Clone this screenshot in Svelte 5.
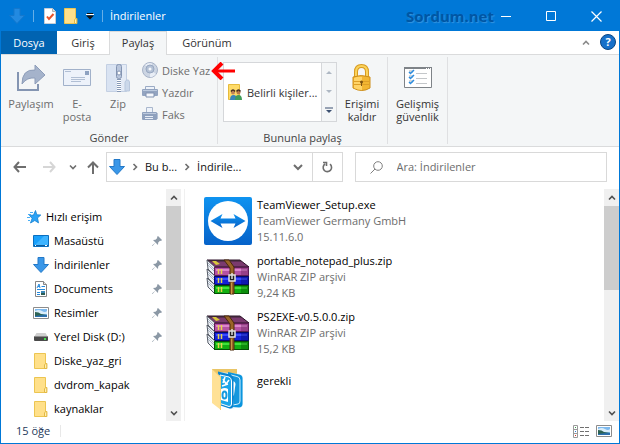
<script lang="ts">
	type TreeItem = { name: string; icon: string; pinned?: boolean };
	type FileItem = { name: string; icon: string; details: string[] };

	const tree: TreeItem[] = [
		{ name: 'Masaüstü', icon: 'desktop', pinned: true },
		{ name: 'İndirilenler', icon: 'download', pinned: true },
		{ name: 'Documents', icon: 'document', pinned: true },
		{ name: 'Resimler', icon: 'picture', pinned: true },
		{ name: 'Yerel Disk (D:)', icon: 'disk', pinned: true },
		{ name: 'Diske_yaz_gri', icon: 'folder' },
		{ name: 'dvdrom_kapak', icon: 'folder' },
		{ name: 'kaynaklar', icon: 'folder' }
	];

	const files: FileItem[] = [
		{ name: 'TeamViewer_Setup.exe', icon: 'teamviewer', details: ['TeamViewer Germany GmbH', '15.11.6.0'] },
		{ name: 'portable_notepad_plus.zip', icon: 'rar', details: ['WinRAR ZIP arşivi', '9,24 KB'] },
		{ name: 'PS2EXE-v0.5.0.0.zip', icon: 'rar', details: ['WinRAR ZIP arşivi', '15,2 KB'] },
		{ name: 'gerekli', icon: 'bigfolder', details: [''] }
	];

	const books = [
		{ y: 8, top: '#dc86cc', mid: '#b552a4', dark: '#5e1f55' },
		{ y: 17, top: '#3a4cff', mid: '#1420d8', dark: '#050a6a' },
		{ y: 26, top: '#3fe23a', mid: '#12b012', dark: '#045004' }
	];

	let search = $state('');
</script>

{#snippet downArrow()}
	<svg width="16" height="16" viewBox="0 0 16 16" aria-hidden="true">
		<path d="M5 .5h6v7h4.5L8 15.5.5 7.5H5z" fill="#3a97e8" stroke="#2379c8" />
	</svg>
{/snippet}

{#snippet folder()}
	<svg width="14" height="16" viewBox="0 0 14 16" aria-hidden="true">
		<path d="M.5.5h11v10h1.2v5H.5z" fill="#ffe08a" stroke="#ecc551" />
		<path d="M10.5 15.5V12l1-1.5h1.3v5z" fill="#fff0b4" stroke="#e3b844" />
	</svg>
{/snippet}

{#snippet picture()}
	<svg width="16" height="12" viewBox="0 0 16 12" aria-hidden="true">
		<path d="M.5.5h15v11H.5z" fill="#fff" stroke="#8c8c8c" />
		<path d="M2 2h12v8H2z" fill="#7db9ee" />
		<path d="M2 4q4-2 7 0t5 0v3H2z" fill="#d9edfa" />
		<path d="M2 5q4 0 6 2l6 1v2H2z" fill="#2d6354" />
		<path d="M2 9q6-1 12-1v2H2z" fill="#2b6fae" />
	</svg>
{/snippet}

{#snippet chevron(dir: string)}
	<svg class="chevron {dir}" width="8" height="8" viewBox="0 0 8 8" aria-hidden="true">
		<path d="M1 2.5 4 5.5l3-3" fill="none" stroke="currentColor" stroke-width="1.6" />
	</svg>
{/snippet}

{#snippet scrollbar()}
	<div class="scrollbar">
		<button aria-label="Yukarı kaydır">{@render chevron('up')}</button>
		<div class="thumb"></div>
		<button class="last" aria-label="Aşağı kaydır">{@render chevron('down')}</button>
	</div>
{/snippet}

{#snippet treeIcon(icon: string)}
	{#if icon === 'desktop'}
		<svg width="16" height="12" viewBox="0 0 16 12" aria-hidden="true">
			<path d="M.5.5h15v11H.5z" fill="#18a0fb" stroke="#0b6fbf" />
			<path d="M1 11 11 1h4v9z" fill="#3fb4ff" />
			<path d="M1 10.5h14" stroke="#0d5c9c" />
			<path d="M2 10.5h1M12 10.5h2" stroke="#fff" />
		</svg>
	{:else if icon === 'download'}
		{@render downArrow()}
	{:else if icon === 'document'}
		<svg width="12" height="16" viewBox="0 0 12 16" aria-hidden="true">
			<path d="M.5.5h8l3 3v12H.5z" fill="#fff" stroke="#858585" />
			<path d="M8.5.5v3h3" fill="#e4e4e4" stroke="#858585" />
			<path d="m2 7 2-4 1 4M3 5.500h2M6.500 5.500H10M2 8.500h8M2 11.500h3M2 13.500h3" fill="none" stroke="#2589dc" />
			<path d="M6 10h4v4H6z" fill="#3d87b8" />
			<path d="M6 12h4v2H6z" fill="#2b5d54" />
		</svg>
	{:else if icon === 'picture'}
		{@render picture()}
	{:else if icon === 'disk'}
		<svg width="14" height="10" viewBox="0 0 14 10" aria-hidden="true">
			<path d="M2.500 1h9L14 5H0z" fill="#cfcfcf" />
			<rect y="4" width="14" height="5" rx="1" fill="#4a4a4a" />
			<path d="M0 4.500h14" stroke="#8b8b8b" />
			<path d="M10 7h2" stroke="#45e04d" stroke-width="2" />
		</svg>
	{:else}
		{@render folder()}
	{/if}
{/snippet}

{#snippet fileIcon(icon: string)}
	{#if icon === 'teamviewer'}
		<svg width="48" height="48" viewBox="0 0 48 48" aria-hidden="true">
			<defs>
				<linearGradient id="tv" x2="0" y2="1">
					<stop offset="0" stop-color="#0f93f0" />
					<stop offset="1" stop-color="#0662c9" />
				</linearGradient>
			</defs>
			<rect width="48" height="48" rx="2" fill="url(#tv)" />
			<circle cx="24" cy="24" r="20" fill="#fff" />
			<path d="m6.500 24 12-7-2 4.500h15l-2-4.500 12 7-12 7 2-4.500h-15l2 4.500z" fill="url(#tv)" />
		</svg>
	{:else if icon === 'rar'}
		<svg width="44" height="36" viewBox="0 0 44 36" aria-hidden="true">
			<path d="M1 1h33l9 7H9z" fill="#7a3a6e" stroke="#2c1028" />
			<path d="M1 1h33l2 1.500H3z" fill="#3b2535" />
			<path d="m6 2 4 4 4-1-4-3z" fill="#d8c83c" />
			{#each books as book}
				<path d="M1 {book.y - 7}l8 7v9l-7-7z" fill="#eef2f7" stroke="#555b66" />
				<path d="m2 {book.y - 4} 6 6M2 {book.y - 2}l6 6" stroke="#a9b4c2" />
				<rect x="8.500" y={book.y + 0.5} width="34" height="8" fill={book.mid} stroke={book.dark} />
				<rect x="10" y={book.y + 2} width="31" height="2" fill={book.top} />
				<rect x="35" y={book.y + 1} width="7" height="7" fill={book.dark} opacity=".35" />
				<path d="M12.500 {book.y + 2}v5M15.500 {book.y + 2}v5" stroke="#e6d34a" stroke-width="1.500" />
			{/each}
			<path d="M18 1h5l5 7v27h-4V9z" fill="#9a6427" stroke="#4a2a0b" />
			<path d="M25.500 24v11" stroke="#c99746" />
			<rect x="23" y="16" width="6" height="6" fill="#222" stroke="#e4e4e4" stroke-width="1.500" />
			<path d="M26 14v6" stroke="#ddd" stroke-width="1.500" />
		</svg>
	{:else}
		<svg width="32" height="42" viewBox="0 0 32 42" aria-hidden="true">
			<path d="M0 1h25v8H8z" fill="#e9c566" />
			<path d="m7 4 20 2q4 1 4 4v26q0 3-4 3l-8 2-12-5z" fill="#d5edf8" />
			<path d="m16 4 11 2.500q3.500.5 3.500 4v25q0 4-3.500 4l-10-1z" fill="#0b95de" />
			<path d="m19 7 6 1.500q3 .5 3 3.500v21q0 3-2 3l-5 1z" fill="#1597dd" stroke="#d4effb" />
			<path d="M20 13q3 0 3.500 3L22 27l-3 3z" fill="#fff" />
			<path d="m6 3.500 12 3q3.500 1 3.500 5v25q0 4.500-4 4L7 37z" fill="#0a84d0" />
			<path d="m8 7 9 2q2.500 1 2.500 4v23q0 2.500-2.500 2.500L8 35.500z" fill="#1ba5e8" stroke="#fff" />
			<path d="M9 21q4-2 7 0v13l-7-2z" fill="#fff" />
			<path d="m11 11 3 5 3-4M10 18l6-2M13 9l-2 6" fill="none" stroke="#fff" stroke-width="1.500" />
			<ellipse cx="12.500" cy="27" rx="2" ry="3.500" fill="none" stroke="#159ade" stroke-width="2" />
			<path d="m0 1 9 8v33l-9-7z" fill="#ffe196" />
			<path d="m0 1 8.500 8v33" fill="none" stroke="#f3cf76" />
		</svg>
	{/if}
{/snippet}

<div class="window">
	<header class="titlebar">
		<span class="app-icon">{@render downArrow()}</span>
		<i class="bar"></i>
		<button aria-label="Özellikler">
			<svg width="12" height="16" viewBox="0 0 12 16" aria-hidden="true">
				<path d="M.5.5h8l3 3v12H.5z" fill="#fff" stroke="#c7ced6" />
				<path d="M8.500.5v3h3" fill="#ddd" stroke="#b0b0b0" />
				<path d="m3 8.500 2 2.500 4.500-5" fill="none" stroke="#e8522a" stroke-width="2" />
			</svg>
		</button>
		<button aria-label="Yeni klasör">{@render folder()}</button>
		<button aria-label="Hızlı Erişim Araç Çubuğunu Özelleştir">
			<svg width="8" height="7" viewBox="0 0 8 7" aria-hidden="true">
				<path d="M1 .5h6" stroke="#111" />
				<path d="M0 2.500h8L4 6.500z" fill="#111" />
				<path d="M0 1.500h8" stroke="#fff" />
			</svg>
		</button>
		<i class="bar"></i>
		<span class="title">İndirilenler</span>
		<span class="brand">Sordum.net</span>
		<div class="controls">
			<button aria-label="Simge durumuna küçült">
				<svg width="11" height="11" viewBox="0 0 11 11"><path d="M0 5.500h10" stroke="#fff" /></svg>
			</button>
			<button aria-label="Ekranı kapla">
				<svg width="11" height="11" viewBox="0 0 11 11"><path d="M.5.5h9v9h-9z" fill="none" stroke="#fff" /></svg>
			</button>
			<button aria-label="Kapat">
				<svg width="11" height="11" viewBox="0 0 11 11"><path d="m.5.5 10 10m0-10-10 10" stroke="#fff" stroke-width="1.200" /></svg>
			</button>
		</div>
	</header>

	<nav class="tabs">
		<button class="file">Dosya</button>
		<button class="home">Giriş</button>
		<button class="active">Paylaş</button>
		<button class="view">Görünüm</button>
		<button class="collapse" aria-label="Şeridi simge durumuna küçült">{@render chevron('up')}</button>
		<button class="help" aria-label="Yardım">?</button>
	</nav>

	<section class="ribbon">
		<div class="group send">
			<div class="tools">
				<button class="large share" disabled>
					<svg width="28" height="28" viewBox="0 0 28 28" aria-hidden="true">
						<path d="M1 8v18h20v-6" fill="none" stroke="#8495b2" stroke-width="2" />
						<path d="M5 20Q5 5 18 6V1l10 10-10 9v-6Q10 13 5 20z" fill="#a5b3cb" stroke="#8d9db9" />
					</svg>
					Paylaşım
				</button>
				<button class="large mail" disabled>
					<svg width="28" height="28" viewBox="0 0 28 28" aria-hidden="true">
						<path d="M.5 5.500h27v16H.5z" fill="#edf2fa" stroke="#a1b1ca" />
						<path d="M22 7h4v4h-4z" fill="#8ea2c1" />
						<path d="M2 7.500h6M8 13.500h14M8 15.500h14M8 17.500h10" stroke="#b1bfd4" />
					</svg>
					E-<br />posta
				</button>
				<button class="large zip" disabled>
					<svg width="24" height="28" viewBox="0 0 24 28" aria-hidden="true">
						<path d="M.5.5h20v27H.5z" fill="#d9e3f2" stroke="#c4d0e3" />
						<path d="M12 1h8v26h-8z" fill="#e4ebf6" />
						<path d="M19 27V18l1.500-2h2l1 2v9z" fill="#cbd8ea" stroke="#b8c7dd" />
						<path d="M13 1v27" stroke="#fff" stroke-width="4" />
						<path d="M13 1v27" stroke="#8799b5" stroke-width="4" stroke-dasharray="1 1" />
						<rect x="10.500" y=".5" width="5" height="14" rx="2" fill="#b9c6dc" stroke="#8394b2" />
						<circle cx="13" cy="9" r="2" fill="#fff" stroke="#8394b2" />
					</svg>
					Zip
				</button>
				<div class="small">
					<button disabled>
						<svg width="16" height="16" viewBox="0 0 16 16" aria-hidden="true">
							<circle cx="8" cy="8" r="7.500" fill="#ccd5e3" stroke="#a7b3c8" />
							<path d="m8 8-5-5q4-3 7-1.500zM8 8l6 4q-3 4-6 3z" fill="#e9eef6" />
							<circle cx="8" cy="7" r="4" fill="#b4c1d5" stroke="#98a8c1" />
							<circle cx="8" cy="7" r="1.500" fill="#f5f8fc" />
						</svg>
						Diske Yaz
					</button>
					<button disabled>
						<svg width="16" height="12" viewBox="0 0 16 12" aria-hidden="true">
							<path d="M3.500.5h9v3h-9z" fill="#eef3fa" stroke="#9babc5" />
							<rect y="3" width="16" height="7" rx="1" fill="#93a4c0" />
							<path d="M1 4.500h14" stroke="#bccade" />
							<path d="M4 7h8v4H4z" fill="#f4f7fc" stroke="#8192b0" />
						</svg>
						Yazdır
					</button>
					<button disabled>
						<svg width="16" height="14" viewBox="0 0 16 14" aria-hidden="true">
							<path d="M4.500.5h6v5h-6z" fill="#eef3fa" stroke="#a9b7cd" />
							<rect y="5" width="15" height="8" rx="1" fill="#8fa1be" />
							<path d="M1 6.500h13" stroke="#bdcade" />
							<path d="M3 9.500h8M3 11.500h8" stroke="#e8eef7" />
							<path d="M15.500 6v6" stroke="#b5c2d6" />
						</svg>
						Faks
					</button>
				</div>
			</div>
			<h2>Gönder</h2>
			<svg class="pointer" width="24" height="18" viewBox="0 0 24 18" aria-hidden="true">
				<path d="M3 9h21" stroke="#f00" stroke-width="3" />
				<path d="M11 1 3 9l8 8" fill="none" stroke="#f00" stroke-width="4" />
			</svg>
		</div>

		<div class="group with">
			<div class="tools">
				<div class="gallery">
					<button class="person">
						<svg width="14" height="16" viewBox="0 0 14 16" aria-hidden="true">
							<path d="M.5.5h11v15H.5z" fill="#ffdb68" stroke="#e6bb3d" />
							<path d="M2 16q0-5 3.500-5 3.500 0 3.500 5z" fill="#3b85b9" />
							<path d="M7 16q0-5 3.500-5 3.500 0 3.500 5z" fill="#419c5a" />
							<circle cx="5" cy="8.500" r="2" fill="#c08358" />
							<circle cx="10.500" cy="8.500" r="2" fill="#b77849" />
							<path d="M3 7.500q2-3 4 0M8.500 7.500q2-3 4 0" fill="none" stroke="#432b1e" stroke-width="1.500" />
						</svg>
						Belirli kişiler...
					</button>
					<div class="spin">
						<button aria-label="Önceki satır"><svg width="6" height="3" viewBox="0 0 6 3"><path d="M0 3h6L3 0z" fill="#aeb7c3" /></svg></button>
						<button aria-label="Sonraki satır"><svg width="6" height="3" viewBox="0 0 6 3"><path d="M0 0h6L3 3z" fill="#aeb7c3" /></svg></button>
						<button aria-label="Diğer"><svg width="8" height="7" viewBox="0 0 8 7"><path d="M0 1h8" stroke="#3a4f70" /><path d="M1 3h6L4 6z" fill="#3a4f70" /></svg></button>
					</div>
				</div>
				<button class="large lock">
					<svg width="20" height="28" viewBox="0 0 20 28" aria-hidden="true">
						<path d="M4 14V8q0-6 5.500-6T15 8v6" fill="none" stroke="#d79a20" stroke-width="4" />
						<path d="M4 14V8q0-6 5.500-6T15 8v6" fill="none" stroke="#fbd35b" stroke-width="2" />
						<path d="M1 13q8-3 17 0v11q-8 5-17 0z" fill="#f2b632" stroke="#cd8e1a" />
						<path d="M2 14q4-2 8-1v13q-4 0-8-2z" fill="#ffd468" />
						<path d="M2 17.500h15M2 20.500h15" stroke="#de9f27" />
						<circle cx="9.500" cy="18" r="1.500" fill="#7d5210" />
						<path d="M9.500 18v4" stroke="#7d5210" />
					</svg>
					Erişimi<br />kaldır
				</button>
			</div>
			<h2>Bununla paylaş</h2>
		</div>

		<div class="group">
			<button class="large security">
				<svg width="28" height="28" viewBox="0 0 28 28" aria-hidden="true">
					<path d="M.5 3.500h27v20H.5z" fill="#fff" stroke="#7e8388" />
					<path d="M0 4h28" stroke="#7e8388" stroke-width="2" />
					<path d="M22 4.500h1m1 0h1m1 0h1" stroke="#fff" />
					<path d="M5 6h4v3H5zm0 5h4v3H5zm0 5h4v3H5z" fill="#d5d8dc" />
					<path d="m5 8 1.500 1.500L10 6m-5 7 1.500 1.500L10 11m-5 7 1.500 1.500L10 16" fill="none" stroke="#2b8de0" stroke-width="1.500" />
					<path d="M12 9.500h11M12 14.500h11M12 19.500h11" stroke="#c4c7ca" />
				</svg>
				Gelişmiş<br />güvenlik
			</button>
		</div>
	</section>

	<div class="navbar">
		<button class="go" aria-label="Geri">
			<svg width="13" height="12" viewBox="0 0 13 12"><path d="M6 1 1.500 6 6 11M1.500 6H13" fill="none" stroke="#6e6e6e" stroke-width="2" /></svg>
		</button>
		<button class="go" aria-label="İleri">
			<svg width="13" height="12" viewBox="0 0 13 12"><path d="m7 1 4.500 5L7 11m4.500-5H0" fill="none" stroke="#d6d6d6" stroke-width="2" /></svg>
		</button>
		<button class="recent" aria-label="Son konumlar">{@render chevron('down')}</button>
		<button class="parent" aria-label="Yukarı">
			<svg width="12" height="13" viewBox="0 0 12 13"><path d="m1 6.500 5-5 5 5M6 1.500V13" fill="none" stroke="#6e6e6e" stroke-width="2" /></svg>
		</button>
		<div class="address">
			{@render downArrow()}
			{@render chevron('right')}
			<a href="#pc">Bu b...</a>
			{@render chevron('right')}
			<a href="#downloads">İndirile...</a>
			<button class="history" aria-label="Önceki konumlar">
				<svg width="10" height="7" viewBox="0 0 10 7"><path d="m1 1 4 4 4-4" fill="none" stroke="#6e6e6e" stroke-width="2" /></svg>
			</button>
			<button class="refresh" aria-label="Yenile">
				<svg width="11" height="12" viewBox="0 0 11 12"><path d="M8 3.200A4.200 4.200 0 1 1 3 3M1 1.500h3.500V5" fill="none" stroke="#6e6e6e" stroke-width="1.600" /></svg>
			</button>
		</div>
		<label class="search">
			<svg width="13" height="13" viewBox="0 0 13 13" aria-hidden="true">
				<circle cx="8" cy="5" r="4.300" fill="none" stroke="#808080" />
				<path d="M5 8 .5 12.500" stroke="#808080" />
			</svg>
			<input type="text" placeholder="Ara: İndirilenler" aria-label="Ara: İndirilenler" bind:value={search} />
		</label>
	</div>

	<main>
		<aside>
			<ul class="tree">
				<li class="root">
					<a href="#quick">
						<svg width="14" height="14" viewBox="0 0 14 14" aria-hidden="true">
							<path d="m8.500.5 1.300 4.300 4 .2-3.300 2.900 1 5-3.700-2.400L3.500 13l1.600-4.600-2.600-3 4-.3z" fill="#2ba3f7" stroke="#1480cf" stroke-width=".8" />
							<path d="M3 2.500h3M1 4.500h3M0 7.500h3M1 10.500h2" stroke="#48aef5" />
						</svg>
						Hızlı erişim
					</a>
				</li>
				{#each tree as item}
					<li>
						<a href="#{item.name}">
							<span class="tree-icon">{@render treeIcon(item.icon)}</span>
							{item.name}
						</a>
						{#if item.pinned}
							<svg class="pin" width="10" height="10" viewBox="0 0 10 10" aria-hidden="true">
								<path d="M6 0 10 4 9 5l-1-.3L6.200 6.500 6 9 3.500 6.500.5 10 0 9.500 3.500 6.500 1 4l2.500-.2L5.300 2 5 1z" fill="#8b98a5" />
							</svg>
						{/if}
					</li>
				{/each}
			</ul>
			{@render scrollbar()}
		</aside>
		<ul class="files">
			{#each files as file}
				<li>
					<span class="thumbnail">{@render fileIcon(file.icon)}</span>
					<div>
						<a href="#{file.name}">{file.name}</a>
						{#each file.details as line}
							<p>{line}</p>
						{/each}
					</div>
				</li>
			{/each}
		</ul>
		{@render scrollbar()}
	</main>

	<footer>
		<span class="count">15 öğe</span>
		<button aria-label="Ayrıntılar">
			<svg width="16" height="13" viewBox="0 0 16 13" aria-hidden="true">
				<path d="M.5.5h4v12h-4zm0 4h4m-4 4h4" fill="#fff" stroke="#9a9a9a" />
				<path d="M7 2.500h4m1 0h4m-9 4h4m1 0h4m-9 4h4m1 0h4" stroke="#707070" />
				<path d="M2 2.500h1" stroke="#3a9e4a" />
				<path d="M2 6.500h1" stroke="#2b7fe0" />
				<path d="M2 10.500h1" stroke="#e0301e" />
			</svg>
		</button>
		<button aria-label="Büyük simgeler">{@render picture()}</button>
	</footer>
</div>

<style>
	:global(body) {
		margin: 0;
	}

	.window {
		display: flex;
		flex-direction: column;
		box-sizing: border-box;
		min-height: 100vh;
		border: 1px solid #0078d7;
		background: #fff;
		color: #000;
		font: 11px/16px 'Open Sans', 'Noto Sans', sans-serif;
	}

	button {
		display: flex;
		align-items: center;
		justify-content: center;
		margin: 0;
		padding: 0;
		border: 0;
		background: none;
		color: inherit;
		font: inherit;
	}

	a {
		color: inherit;
		text-decoration: none;
	}

	svg {
		display: block;
		flex: none;
	}

	ul {
		margin: 0;
		padding: 0;
		list-style: none;
	}

	.titlebar {
		display: flex;
		align-items: center;
		gap: 8px;
		height: 30px;
		padding-left: 8px;
		background: #0078d7;
		color: #fff;
	}

	.app-icon {
		opacity: 0.6;
	}

	.bar {
		width: 1px;
		height: 12px;
		margin-right: 2px;
		background: #66aee7;
	}

	.title {
		margin-right: auto;
		margin-left: -3px;
	}

	.brand {
		margin-right: -8px;
		color: #0056a4;
		font-size: 15px;
		font-weight: 700;
		text-shadow: 1px 1px 1px #3394df;
	}

	.controls {
		display: flex;
		gap: 20px;
		padding-right: 10px;
	}

	.controls button {
		width: 25px;
		height: 30px;
	}

	.tabs {
		display: flex;
		height: 23px;
		border-bottom: 1px solid #dadbdc;
		color: #333;
	}

	.file {
		width: 56px;
		background: #0063b1;
		color: #fff;
	}

	.home {
		width: 52px;
	}

	.active {
		width: 58px;
		height: 24px;
		padding-bottom: 1px;
		border: 1px solid #dadbdc;
		border-bottom: 0;
		background: #f4f6f7;
	}

	.view {
		width: 80px;
	}

	.collapse {
		margin-left: auto;
		color: #8a8a8a;
	}

	.help {
		width: 16px;
		height: 16px;
		margin: 3px 3px 0 10px;
		border: 1px solid #0a4683;
		border-radius: 50%;
		background: #1670c9;
		color: #fff;
		font-weight: 700;
	}

	.ribbon {
		display: flex;
		height: 91px;
		border-bottom: 1px solid #dadbdc;
		background: #f4f6f7;
		color: #333;
		line-height: 13px;
	}

	.group {
		position: relative;
		display: flex;
		flex-direction: column;
		margin: 2px 0;
		border-right: 1px solid #dfe0e2;
	}

	.group h2 {
		margin: auto 0 0;
		color: #444;
		font-size: 11px;
		font-weight: 400;
		line-height: 13px;
		text-align: center;
	}

	.tools {
		display: flex;
	}

	.send .tools {
		width: 215px;
		padding-left: 1px;
		color: #6d6d6d;
	}

	.large {
		flex-direction: column;
		justify-content: flex-start;
		gap: 5px;
		padding-top: 7px;
		white-space: nowrap;
	}

	.share {
		width: 58px;
	}

	.mail {
		width: 34px;
	}

	.zip {
		width: 48px;
	}

	.small {
		display: flex;
		flex-direction: column;
		gap: 6px;
		padding-top: 5px;
	}

	.small button {
		justify-content: flex-start;
		gap: 4px;
		height: 16px;
		white-space: nowrap;
	}

	.pointer {
		position: absolute;
		top: 5px;
		right: -18px;
		z-index: 1;
	}

	.with .tools {
		padding-left: 5px;
	}

	.gallery {
		display: flex;
		width: 112px;
		height: 58px;
		margin-top: 5px;
		border: 1px solid #d5d7da;
		background: #fff;
	}

	.person {
		flex: 1;
		justify-content: flex-start;
		gap: 5px;
		padding-left: 4px;
		white-space: nowrap;
	}

	.spin {
		width: 14px;
		border-left: 1px solid #d5d7da;
		background: #f4f6f7;
	}

	.spin button {
		width: 100%;
		height: 19px;
	}

	.lock {
		width: 50px;
	}

	.security {
		width: 59px;
	}

	.navbar {
		display: flex;
		align-items: center;
		height: 30px;
		padding: 5px 12px 7px;
	}

	.go {
		width: 13px;
		margin-right: 17px;
	}

	.recent {
		margin-left: -4px;
		color: #6e6e6e;
	}

	.parent {
		margin: 0 7px 0 10px;
	}

	.address,
	.search {
		display: flex;
		align-items: center;
		box-sizing: border-box;
		height: 30px;
		border: 1px solid #d9d9d9;
	}

	.address {
		flex: 58 1 0;
		gap: 6px;
		padding-left: 2px;
		color: #111;
		white-space: nowrap;
	}

	.address .chevron {
		color: #6e6e6e;
	}

	.history {
		margin-left: auto;
		padding-right: 3px;
	}

	.refresh {
		width: 30px;
		height: 28px;
		border-left: 1px solid #d9d9d9;
	}

	.search {
		flex: 59 1 0;
		gap: 14px;
		margin-left: 12px;
		padding-left: 14px;
	}

	.search input {
		flex: 1;
		min-width: 0;
		padding: 0;
		border: 0;
		outline: 0;
		background: none;
		font: inherit;
	}

	.search input::placeholder {
		color: #6d6d6d;
		opacity: 1;
	}

	.chevron.up {
		transform: rotate(180deg);
	}

	.chevron.right {
		transform: rotate(-90deg);
	}

	main {
		display: flex;
		flex: 1;
	}

	aside {
		display: flex;
		flex: 0 0 180px;
		margin-right: 3px;
	}

	.tree {
		flex: 1;
		padding-top: 16px;
	}

	.tree li {
		display: flex;
		align-items: center;
		height: 24px;
		padding: 0 4px 0 32px;
	}

	.tree .root {
		padding-left: 26px;
	}

	.tree a {
		display: flex;
		align-items: center;
		gap: 5px;
	}

	.tree-icon {
		display: flex;
		justify-content: center;
		width: 16px;
	}

	.pin {
		margin-left: auto;
	}

	.scrollbar {
		display: flex;
		flex: 0 0 15px;
		flex-direction: column;
		background: #f0f0f0;
		color: #505050;
	}

	.scrollbar button {
		height: 17px;
	}

	.thumb {
		height: 84px;
		background: #cdcdcd;
	}

	.scrollbar .last {
		margin-top: auto;
	}

	.files {
		flex: 1;
		padding: 4px 0 0 19px;
		border-left: 1px solid #f0f0f0;
	}

	.files li {
		display: flex;
		align-items: center;
		gap: 5px;
		height: 56px;
	}

	.thumbnail {
		display: flex;
		justify-content: center;
		width: 48px;
	}

	.files p {
		min-height: 16px;
		margin: 0;
		color: #6d6d6d;
	}

	footer {
		display: flex;
		align-items: center;
		gap: 7px;
		height: 20px;
		padding: 0 7px 2px 15px;
		color: #1e395b;
	}

	.count {
		margin-right: auto;
		padding-right: 10px;
		border-right: 1px solid #e8e8e8;
		line-height: 12px;
	}
</style>
